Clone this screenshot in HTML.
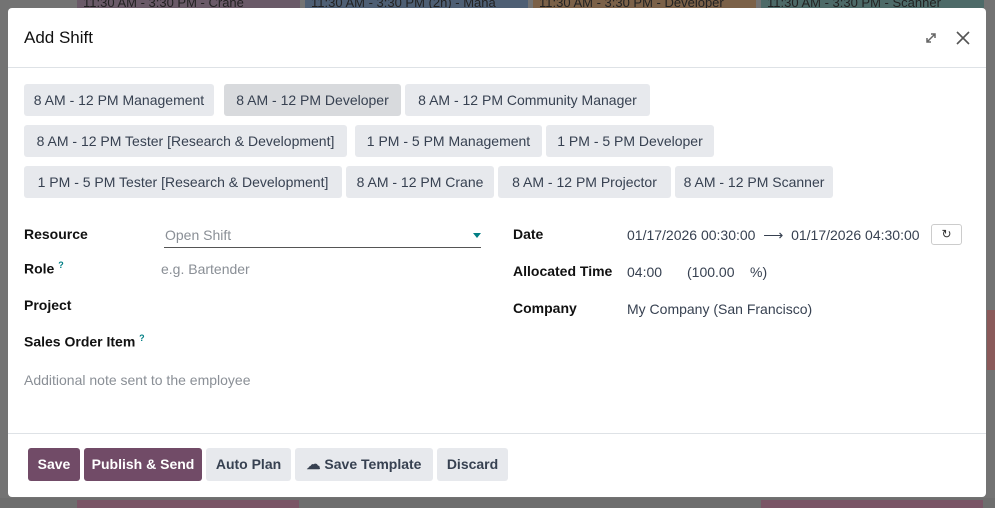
<html><head><style>
body{margin:0;width:995px;height:508px;background:#737373;font-family:"Liberation Sans",sans-serif;position:relative;overflow:hidden;font-size:14px;color:#212529}
.bg{position:absolute;height:10px;top:-2px;color:#222;font-size:13px;padding-left:6px;line-height:10px;overflow:hidden}
.m{position:absolute;left:8px;top:8px;width:978px;height:489px;background:#fff;border-radius:4px}
.h{height:59px;border-bottom:1px solid #dee2e6;position:relative}
.h span{position:absolute;left:16px;top:20px;font-size:17px;color:#111}
.b{position:absolute;height:32px;line-height:32px;background:#e7e9ed;border-radius:3px;font-size:14px;color:#374151;white-space:nowrap;text-align:center}
.l{position:absolute;font-weight:bold;font-size:14px;color:#111}
.v{position:absolute;font-size:14px;color:#374151}
.p{color:#8a8f96}
.f{position:absolute;left:0;right:0;top:425px;border-top:1px solid #dee2e6}
.fb{position:absolute;top:440px;height:33px;line-height:33px;border-radius:3px;font-size:14px;font-weight:bold;background:#e7e9ed;color:#374151;text-align:center;white-space:nowrap}
.pr{background:#714b67;color:#fff}
</style></head><body>
<div class="bg" style="left:77px;width:217px;background:#6a5a68">11:30 AM - 3:30 PM - Crane</div>
<div class="bg" style="left:305px;width:217px;background:#4e5f74">11:30 AM - 3:30 PM (2h) - Mana</div>
<div class="bg" style="left:533px;width:217px;background:#7b6148">11:30 AM - 3:30 PM - Developer</div>
<div class="bg" style="left:761px;width:217px;background:#4d6a68">11:30 AM - 3:30 PM - Scanner</div>
<div style="position:absolute;left:0;top:498px;width:995px;height:10px;background:#6e6e6e"></div>
<div style="position:absolute;left:77px;top:500px;width:222px;height:8px;background:#7a5566"></div>
<div style="position:absolute;left:761px;top:500px;width:222px;height:8px;background:#7a5566"></div>
<div style="position:absolute;left:987px;top:310px;width:8px;height:60px;background:#8a5a5a"></div>
<div class="m">
<div class="h"><span>Add Shift</span>
<svg style="position:absolute;left:916px;top:23px" width="14" height="14" viewBox="0 0 14 14" stroke="#666" stroke-width="1.5" fill="none"><path d="M3 11L11 3M7 3h4v4M3 7v4h4"/></svg>
<svg style="position:absolute;left:947px;top:22px" width="16" height="16" viewBox="0 0 16 16" stroke="#555" stroke-width="1.6"><path d="M2 2L14 14M14 2L2 14"/></svg>
</div>
<div class="b" style="left:16px;top:76px;width:190px">8 AM - 12 PM Management</div>
<div class="b" style="left:216px;top:76px;width:177px;background:#d8dadd">8 AM - 12 PM Developer</div>
<div class="b" style="left:397px;top:76px;width:245px">8 AM - 12 PM Community Manager</div>
<div class="b" style="left:16px;top:117px;width:323px">8 AM - 12 PM Tester [Research &amp; Development]</div>
<div class="b" style="left:347px;top:117px;width:187px">1 PM - 5 PM Management</div>
<div class="b" style="left:538px;top:117px;width:168px">1 PM - 5 PM Developer</div>
<div class="b" style="left:16px;top:158px;width:318px">1 PM - 5 PM Tester [Research &amp; Development]</div>
<div class="b" style="left:338px;top:158px;width:148px">8 AM - 12 PM Crane</div>
<div class="b" style="left:490px;top:158px;width:173px">8 AM - 12 PM Projector</div>
<div class="b" style="left:667px;top:158px;width:158px">8 AM - 12 PM Scanner</div>

<div class="l" style="left:16px;top:218px">Resource</div>
<div class="v p" style="left:157px;top:219px">Open Shift</div>
<div style="position:absolute;left:156px;top:239px;width:317px;border-top:1px solid #555"></div>
<div style="position:absolute;left:465px;top:225px;border:4px solid transparent;border-top:5px solid #017e84"></div>
<div class="l" style="left:16px;top:252px">Role <sup style="color:#017e84;font-size:9px">?</sup></div>
<div class="v p" style="left:153px;top:253px">e.g. Bartender</div>
<div class="l" style="left:16px;top:289px">Project</div>
<div class="l" style="left:16px;top:325px">Sales Order Item <sup style="color:#017e84;font-size:9px">?</sup></div>
<div class="v p" style="left:16px;top:364px">Additional note sent to the employee</div>

<div class="l" style="left:505px;top:218px">Date</div>
<div class="v" style="left:619px;top:219px">01/17/2026 00:30:00 &nbsp;⟶&nbsp; 01/17/2026 04:30:00</div>
<div style="position:absolute;left:923px;top:216px;width:29px;height:19px;border:1px solid #ccc;border-radius:3px;text-align:center;font-size:12px;line-height:19px;color:#333">↻</div>
<div class="l" style="left:505px;top:255px">Allocated Time</div>
<div class="v" style="left:619px;top:256px">04:00</div>
<div class="v" style="left:679px;top:256px">(100.00 &nbsp;&nbsp; %)</div>
<div class="l" style="left:505px;top:292px">Company</div>
<div class="v" style="left:619px;top:293px">My Company (San Francisco)</div>

<div class="f"></div>
<div class="fb pr" style="left:20px;width:52px">Save</div>
<div class="fb pr" style="left:76px;width:118px">Publish &amp; Send</div>
<div class="fb" style="left:198px;width:85px">Auto Plan</div>
<div class="fb" style="left:287px;width:138px">☁ Save Template</div>
<div class="fb" style="left:429px;width:71px">Discard</div>
</div>
</body></html>
